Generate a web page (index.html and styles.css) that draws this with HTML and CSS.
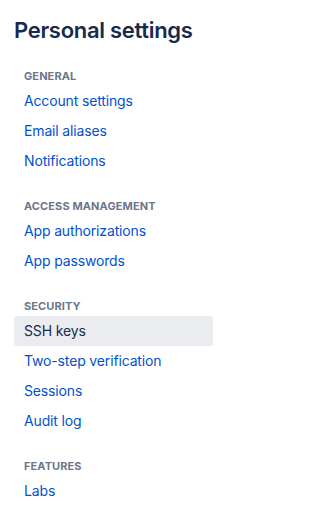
FILE: index.html
```html
<!DOCTYPE html>
<html lang="en">
<head>
<meta charset="utf-8">
<title>Personal settings</title>
<link rel="stylesheet" href="styles.css">
</head>
<body>
<nav class="sidebar">
  <h1 class="title">Personal settings</h1>
  <div class="group">
    <h2 class="heading">General</h2>
    <a class="item" href="#">Account settings</a>
    <a class="item" href="#">Email aliases</a>
    <a class="item" href="#">Notifications</a>
  </div>
  <div class="group">
    <h2 class="heading">Access management</h2>
    <a class="item" href="#">App authorizations</a>
    <a class="item" href="#">App passwords</a>
  </div>
  <div class="group">
    <h2 class="heading">Security</h2>
    <a class="item selected" href="#">SSH keys</a>
    <a class="item" href="#">Two-step verification</a>
    <a class="item" href="#">Sessions</a>
    <a class="item" href="#">Audit log</a>
  </div>
  <div class="group">
    <h2 class="heading">Features</h2>
    <a class="item" href="#">Labs</a>
  </div>
</nav>
</body>
</html>
```

FILE: styles.css
```css
html, body {
  margin: 0;
  padding: 0;
  background: #ffffff;
}
body {
  font-family: Inter, "Noto Sans", sans-serif;
}
.sidebar {
  width: 199px;
  padding: 0 16px 0 14px;
  display: flex;
  flex-direction: column;
}
.title {
  margin: 16px 0 0 0;
  font-size: 22px;
  line-height: 28px;
  font-weight: 600;
  color: #172b4d;
  letter-spacing: -0.3px;
}
.group {
  display: flex;
  flex-direction: column;
  margin-top: 24px;
}
.group + .group {
  margin-top: 22px;
}
.heading {
  margin: 0;
  padding: 0 10px;
  height: 16px;
  line-height: 16px;
  font-size: 11px;
  font-weight: 700;
  text-transform: uppercase;
  color: #6b778c;
  letter-spacing: 0.1px;
  margin-bottom: 2px;
}
.item {
  display: block;
  height: 30px;
  line-height: 30px;
  padding: 0 10px;
  font-size: 14px;
  letter-spacing: -0.15px;
  color: #0052cc;
  text-decoration: none;
  border-radius: 3px;
}
.item.selected {
  background: #ebecf0;
  color: #172b4d;
}
```
